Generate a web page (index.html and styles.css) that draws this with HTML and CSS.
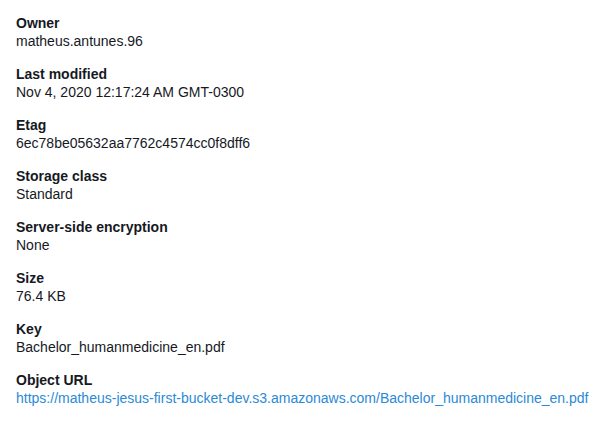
FILE: index.html
```html
<!DOCTYPE html>
<html>
<head>
<meta charset="utf-8">
<link rel="stylesheet" href="styles.css">
</head>
<body>
<div class="props">
  <div class="prop"><div class="label">Owner</div><div class="value">matheus.antunes.96</div></div>
  <div class="prop"><div class="label">Last modified</div><div class="value">Nov 4, 2020 12:17:24 AM GMT-0300</div></div>
  <div class="prop"><div class="label">Etag</div><div class="value">6ec78be05632aa7762c4574cc0f8dff6</div></div>
  <div class="prop"><div class="label">Storage class</div><div class="value">Standard</div></div>
  <div class="prop"><div class="label">Server-side encryption</div><div class="value">None</div></div>
  <div class="prop"><div class="label">Size</div><div class="value">76.4 KB</div></div>
  <div class="prop"><div class="label">Key</div><div class="value">Bachelor_humanmedicine_en.pdf</div></div>
  <div class="prop"><div class="label">Object URL</div><div class="value"><a class="link" href="#">https://matheus-jesus-first-bucket-dev.s3.amazonaws.com/Bachelor_humanmedicine_en.pdf</a></div></div>
</div>
</body>
</html>
```
FILE: styles.css
```css
html, body {
  margin: 0;
  padding: 0;
  background: #ffffff;
}
body {
  font-family: "Liberation Sans", Arial, sans-serif;
  font-size: 14px;
  line-height: 18px;
  color: #16191f;
}
.props {
  display: flex;
  flex-direction: column;
  gap: 15px;
  padding: 14px 16px;
}
.label {
  font-weight: bold;
  color: #16191f;
}
.value {
  color: #16191f;
}
.link {
  color: #2b8ad6;
  text-decoration: none;
}
```
